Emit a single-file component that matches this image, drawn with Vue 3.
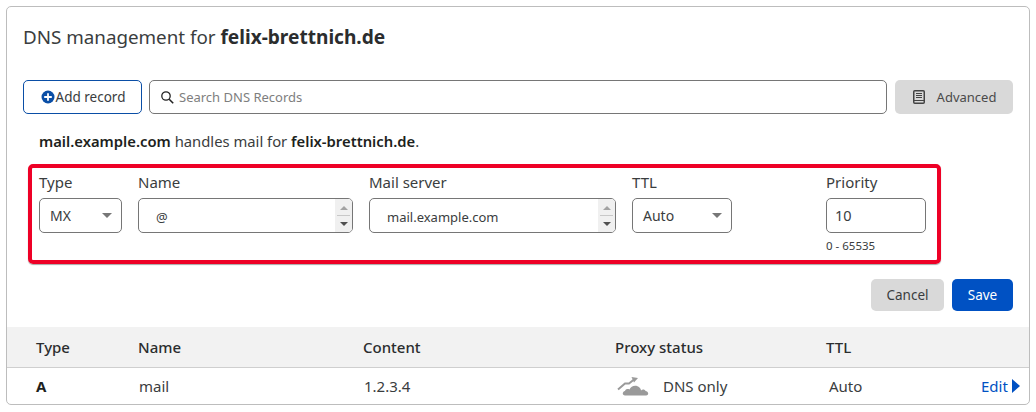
<script setup>
const headers = [
  { label: 'Type', cls: 'c-type' },
  { label: 'Name', cls: 'c-name' },
  { label: 'Content', cls: 'c-content' },
  { label: 'Proxy status', cls: 'c-proxy' },
  { label: 'TTL', cls: 'c-ttl' },
]
</script>

<template>
  <div class="page">
    <section class="card">
      <div class="inner">
        <h1 class="title">DNS management for <b>felix-brettnich.de</b></h1>

        <div class="toolbar">
          <button class="btn-add">
            <svg width="14" height="14" viewBox="0 0 14 14" aria-hidden="true">
              <circle cx="7" cy="7" r="6.5" fill="#0a4ea6" />
              <path d="M7 3.2v7.6M3.2 7h7.6" stroke="#fff" stroke-width="1.8" />
            </svg>
            <span>Add record</span>
          </button>
          <div class="search">
            <svg width="15" height="15" viewBox="0 0 15 15" aria-hidden="true">
              <circle cx="6" cy="6" r="4.2" fill="none" stroke="#222" stroke-width="1.3" />
              <path d="M9.2 9.2l4 4" stroke="#222" stroke-width="1.6" />
            </svg>
            <span>Search DNS Records</span>
          </div>
          <button class="btn-adv">
            <svg width="12" height="14" viewBox="0 0 12 14" aria-hidden="true">
              <rect x="0.75" y="0.75" width="10.5" height="12.5" rx="1" fill="none" stroke="#444" stroke-width="1.5" />
              <path d="M3 3.500h6M3 5.500h6M3 7.500h6" stroke="#444" stroke-width="1" />
              <path d="M1 10.500h10" stroke="#444" stroke-width="1" />
            </svg>
            <span>Advanced</span>
          </button>
        </div>

        <p class="info"><b>mail.example.com</b> handles mail for <b>felix-brettnich.de</b>.</p>

        <div class="form">
          <div class="field f-type">
            <label>Type</label>
            <div class="control select"><span>MX</span><i class="caret"></i></div>
          </div>
          <div class="field f-name">
            <label>Name</label>
            <div class="control text">
              <span>@</span>
              <div class="spin"><i class="up"></i><i class="sep"></i><i class="down"></i></div>
            </div>
          </div>
          <div class="field f-mail">
            <label>Mail server</label>
            <div class="control text">
              <span>mail.example.com</span>
              <div class="spin"><i class="up"></i><i class="sep"></i><i class="down"></i></div>
            </div>
          </div>
          <div class="field f-ttl">
            <label>TTL</label>
            <div class="control select"><span>Auto</span><i class="caret"></i></div>
          </div>
          <div class="field f-prio">
            <label>Priority</label>
            <div class="control plain"><span>10</span></div>
            <small>0 - 65535</small>
          </div>
        </div>

        <div class="actions">
          <button class="btn-cancel">Cancel</button>
          <button class="btn-save">Save</button>
        </div>
      </div>

      <div class="row head">
        <div v-for="h in headers" :key="h.label" :class="h.cls">{{ h.label }}</div>
      </div>
      <div class="row body">
        <div class="c-type"><b>A</b></div>
        <div class="c-name shift">mail</div>
        <div class="c-content shift">1.2.3.4</div>
        <div class="c-proxy status">
          <svg width="34" height="20" viewBox="0 0 34 20" aria-hidden="true">
            <path d="M1 13.500l7-6h4l5-4" fill="none" stroke="#9a9a9a" stroke-width="2" />
            <path d="M14.500 1l6.500 1-4 4.500z" fill="#9a9a9a" />
            <path d="M8 19.500c-3 0-3-4 0-4.500 0.500-2 3-2.500 4.500-1.500 1.500-4 7-5 10-2 1 1 1.500 2 1.500 3 1.500-1.500 4-1 4.500 0.500 3 0 4 4.500 0.500 4.500z" fill="#9a9a9a" />
          </svg>
          <span>DNS only</span>
        </div>
        <div class="c-ttl shift-ttl">Auto</div>
        <div class="edit">Edit <i class="tri"></i></div>
      </div>
    </section>
  </div>
</template>

<style>
html, body { margin: 0; background: #fff; }
</style>

<style scoped>
.page {
  width: 1036px;
  height: 412px;
  padding: 6px 6px 0 6px;
  box-sizing: border-box;
  font-family: "Noto Sans", "Open Sans", sans-serif;
  font-size: 15px;
  color: #3a3d3e;
  overflow: hidden;
}
.card {
  width: 1024px;
  height: 399px;
  box-sizing: border-box;
  border: 1px solid #bdbdbd;
  border-radius: 5px;
  overflow: hidden;
  display: flex;
  flex-direction: column;
}
.inner {
  height: 320px;
  box-sizing: border-box;
  padding: 0 16px;
  flex: none;
}
b { font-weight: 600; color: #1d1f20; }
.title {
  margin: 0;
  padding-top: 16px;
  height: 73px;
  box-sizing: border-box;
  font-size: 18.8px;
  line-height: 28px;
  font-weight: 400;
}
.title b { font-weight: 700; font-size: 19.1px; color: #2b2d2e; }
.toolbar { display: flex; height: 34px; gap: 7px; font-size: 13.500px; }
button {
  font: inherit;
  border-radius: 5px;
  cursor: pointer;
  box-sizing: border-box;
}
.btn-add {
  width: 119px;
  border: 1px solid #0a4ea6;
  background: #fff;
  color: #3a3d3e;
  display: flex;
  align-items: center;
  justify-content: center;
  padding: 0 0 0 1px;
  gap: 1px;
}
.search {
  width: 738px;
  box-sizing: border-box;
  border: 1px solid #767676;
  border-radius: 5px;
  display: flex;
  align-items: center;
  padding-left: 10px;
  gap: 4px;
  color: #7e7e7e;
  font-size: 13px;
}
.btn-adv {
  margin-left: 1px;
  width: 118px;
  border: 0;
  background: #d9d9d9;
  color: #4a4a4a;
  display: flex;
  align-items: center;
  justify-content: center;
  gap: 12px;
  padding: 0 0 0 1px;
  font-size: 13px;
}
.info {
  margin: 0;
  padding: 16px 0 0 16px;
  height: 50px;
  box-sizing: border-box;
  line-height: 22px;
  font-size: 14.800px;
}
.form {
  width: 913px;
  height: 100px;
  box-sizing: border-box;
  margin-left: 5px;
  border: 4px solid #ee0026;
  border-radius: 5px;
  box-shadow: 0 1px 1px rgba(0, 0, 0, 0.35);
  padding: 5px 0 0 7px;
  display: flex;
}
.field { display: flex; flex-direction: column; flex: none; }
.field label { height: 25px; line-height: 18px; }
.f-type { width: 83px; margin-right: 16px; }
.f-name { width: 215px; margin-right: 16px; }
.f-mail { width: 247px; margin-right: 16px; }
.f-ttl { width: 100px; margin-right: 94px; }
.f-prio { width: 100px; }
.control {
  height: 35px;
  box-sizing: border-box;
  border: 1px solid #767676;
  border-radius: 5px;
  display: flex;
  align-items: center;
  position: relative;
  font-size: 14px;
  overflow: hidden;
}
.select { padding-left: 10px; justify-content: space-between; padding-right: 9px; }
.caret {
  width: 0;
  height: 0;
  border-left: 5px solid transparent;
  border-right: 5px solid transparent;
  border-top: 5px solid #777;
}
.text { padding-left: 17px; padding-top: 2px; font-size: 13px; }
.plain { padding-left: 8px; padding-bottom: 2px; font-size: 14.500px; }
.spin {
  position: absolute;
  right: 0;
  top: 0;
  bottom: 0;
  width: 17px;
  background: #f0f0f0;
  display: flex;
  flex-direction: column;
  align-items: center;
}
.spin .up, .spin .down {
  width: 0;
  height: 0;
  border-left: 4px solid transparent;
  border-right: 4px solid transparent;
}
.up { border-bottom: 4px solid #a3a3a3; margin-top: 7px; }
.sep { width: 13px; height: 1px; background: #c8c8c8; margin-top: 5px; }
.down { border-top: 4px solid #505050; margin-top: 6px; }
small {
  font-size: 11.500px;
  line-height: 16px;
  margin-top: 5px;
  color: #3a3d3e;
}
.actions {
  display: flex;
  justify-content: flex-end;
  gap: 8px;
  margin-top: 15px;
  font-size: 13.500px;
}
.actions button { height: 32px; border: 0; padding: 0; }
.btn-cancel { width: 73px; background: #d9d9d9; color: #3a3d3e; }
.btn-save { width: 61px; background: #0051c3; color: #fff; }
.row { display: flex; align-items: center; flex: none; }
.head {
  height: 41px;
  background: #f2f2f2;
  border-bottom: 1px solid #cfcfcf;
  box-sizing: border-box;
  font-weight: 500;
  color: #2b2d2e;
}
.body { height: 36px; }
.c-type { width: 102px; margin-left: 29px; flex: none; }
.c-type b { font-weight: 700; }
.c-name { width: 225px; flex: none; }
.c-content { width: 252px; flex: none; }
.c-proxy { width: 211px; flex: none; }
.c-ttl { width: 100px; flex: none; }
.shift { padding-left: 1px; box-sizing: border-box; }
.shift-ttl { padding-left: 3px; box-sizing: border-box; }
.status { display: flex; align-items: center; gap: 12px; padding-left: 2px; box-sizing: border-box; }
.edit {
  margin-left: 55px;
  color: #0051c3;
  display: flex;
  align-items: center;
  white-space: nowrap;
}
.tri {
  width: 0;
  height: 0;
  margin-left: 4px;
  border-top: 7px solid transparent;
  border-bottom: 7px solid transparent;
  border-left: 8px solid #0051c3;
}
</style>
